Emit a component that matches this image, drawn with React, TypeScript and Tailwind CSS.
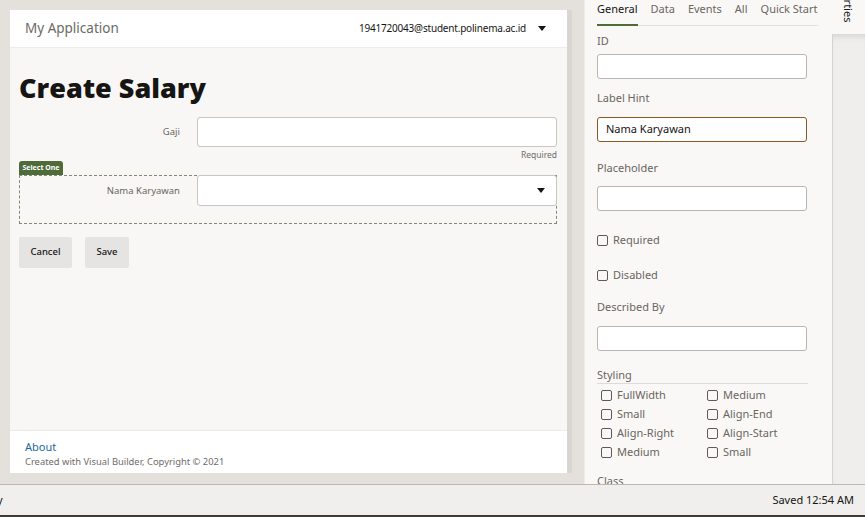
import React from 'react';

const font = { fontFamily: '"Noto Sans", "Open Sans", sans-serif' };

const Caret = ({ className = '' }: { className?: string }) => (
  <svg viewBox="0 0 8 5" className={className} fill="#161513">
    <path d="M0 0h8L4 5z" />
  </svg>
);

const Box = () => (
  <span className="inline-block w-[11px] h-[11px] rounded-[2px] border border-[#5f5863] bg-transparent shrink-0" />
);

const styling = [
  ['FullWidth', 'Medium'],
  ['Small', 'Align-End'],
  ['Align-Right', 'Align-Start'],
  ['Medium', 'Small'],
];

const Field = ({ label, value, mt, gap, focus }: { label: string; value?: string; mt: string; gap: string; focus?: boolean }) => (
  <div className={mt}>
    <div className="h-4 leading-4 text-[11px] text-[#6b655f]">{label}</div>
    <div
      className={`${gap} w-[210px] h-[25px] rounded-[3px] bg-white border flex items-center px-[8px] text-[11px] text-[#161513] ${
        focus ? 'border-[#8a5a22]' : 'border-[#b9b6b2]'
      }`}
    >
      {value}
    </div>
  </div>
);

export default function App() {
  return (
    <div className="w-[865px] h-[517px] flex flex-col bg-[#e4e1dd] overflow-hidden" style={font}>
      <div className="flex flex-1 min-h-0">
        {/* canvas */}
        <div className="w-[584px] pt-[10px] pl-[10px] pr-[12px] pb-[11px] flex">
          <div className="w-[557px] flex flex-col bg-[#f8f7f5]">
            <header className="h-[38px] bg-white border-b border-[#eeedeb] flex items-center justify-between pl-[15px] pr-[21px]">
              <span className="text-[13.5px] text-[#6c6a66]">My Application</span>
              <div className="flex items-center gap-[12px]">
                <span className="text-[10px] tracking-[-0.2px] text-[#161513]">1941720043@student.polinema.ac.id</span>
                <Caret className="w-[8px] h-[5px]" />
              </div>
            </header>

            <main className="flex-1 pl-[9px] pr-[10px]">
              <h1 className="mt-[22px] text-[27px] leading-[36px] font-extrabold text-[#161513]" style={{ fontFamily: '"Open Sans", "Noto Sans", sans-serif' }}>
                Create Salary
              </h1>

              <div className="mt-[11px] flex items-center">
                <label className="w-[161px] text-right text-[9.5px] text-[#6b655f]">Gaji</label>
                <div className="ml-[17px] w-[360px] h-[30px] bg-white border border-[#c8c6c2] rounded-[3px]" />
              </div>
              <div className="text-right text-[8.5px] leading-[13px] mt-[1px] text-[#6f6c68]">Required</div>

              <div className="w-[44px] h-[14px] rounded-t-[3px] bg-[#4f6b3a] text-white text-[7px] font-bold leading-[14px] text-center">
                Select One
              </div>
              <div className="h-[49px] border border-dashed border-[#7f8c74]">
                <div className="flex items-center">
                  <label className="w-[160px] text-right text-[9.5px] text-[#6b655f]">Nama Karyawan</label>
                  <div className="ml-[17px] w-[360px] h-[31px] -mt-px -mr-px bg-white border border-[#c8c6c2] rounded-[3px] flex items-center justify-end pr-[11px]">
                    <Caret className="w-[8px] h-[5px]" />
                  </div>
                </div>
              </div>

              <div className="mt-[13px] flex gap-[13px]">
                <button className="w-[53px] h-[31px] rounded-[2px] bg-[#e5e4e2] text-[9.5px] font-medium text-[#161513]">Cancel</button>
                <button className="w-[44px] h-[31px] rounded-[2px] bg-[#e5e4e2] text-[9.5px] font-medium text-[#161513]">Save</button>
              </div>
            </main>

            <footer className="h-[43px] bg-white border-t border-[#ebeae8] pl-[15px] pt-[7px]">
              <div className="text-[11px] leading-[17px] text-[#1d6a9b]">About</div>
              <div className="text-[9.4px] leading-[13px] text-[#6f6c68]">Created with Visual Builder, Copyright © 2021</div>
            </footer>
          </div>
          <div className="w-[5px] bg-[#d9d6d2]" />
        </div>

        <div className="w-px bg-[#efedeb]" />

        {/* properties panel */}
        <div className="w-[247px] bg-[#f9f8f6] pl-[12px] overflow-hidden">
          <div className="w-[221px] h-[26px] border-b border-[#e2e0dd] flex gap-[13px] text-[11px]">
            <span className="h-[26px] pt-[1px] border-b-2 border-[#4f6b3a] text-[#161513]">General</span>
            <span className="pt-[1px] text-[#6b655f]">Data</span>
            <span className="pt-[1px] text-[#6b655f]">Events</span>
            <span className="pt-[1px] text-[#6b655f]">All</span>
            <span className="pt-[1px] text-[#6b655f]">Quick Start</span>
          </div>

          <Field label="ID" mt="mt-[7px]" gap="mt-[5px]" />
          <Field label="Label Hint" mt="mt-[11px]" gap="mt-[11px]" value="Nama Karyawan" focus />
          <Field label="Placeholder" mt="mt-[18px]" gap="mt-[10px]" />

          <div className="mt-[21px] h-4 flex items-center gap-[5px] text-[11px] text-[#6b655f]">
            <Box />
            Required
          </div>
          <div className="mt-[19px] h-4 flex items-center gap-[5px] text-[11px] text-[#6b655f]">
            <Box />
            Disabled
          </div>

          <Field label="Described By" mt="mt-[16px]" gap="mt-[11px]" />

          <div className="mt-[16px] w-[211px] h-[17px] border-b border-[#dedcd9] text-[11px] leading-4 text-[#6b655f]">Styling</div>
          <div className="mt-[2px] pl-[4px] grid grid-cols-[106px_106px]">
            {styling.flat().map((s, i) => (
              <div key={i} className="h-[19px] flex items-center gap-[5px] text-[11px] text-[#6b655f]">
                <Box />
                {s}
              </div>
            ))}
          </div>
          <div className="mt-[11px] h-4 leading-4 text-[11px] text-[#6b655f]">Class</div>
        </div>

        {/* vertical tab strip */}
        <div className="w-[33px] flex flex-col">
          <div className="h-[34px] bg-[#f9f8f6] flex items-end justify-center pb-[12px] overflow-hidden">
            <span className="text-[11px] text-[#161513] leading-none whitespace-nowrap [writing-mode:vertical-rl]">Properties</span>
          </div>
          <div className="flex-1 bg-[#efeeec] border-l border-[#d6d3cf] shadow-[inset_0_6px_6px_-4px_rgba(0,0,0,0.12)]" />
        </div>
      </div>

      <div className="h-[33px] bg-[#f0efed] border-t border-[#bdbab6] border-b-2 border-b-[#3d3935] flex items-center justify-between pr-[11px] text-[11px] text-[#161513]">
        <span className="-ml-[3px]">y</span>
        <span>Saved 12:54 AM</span>
      </div>
    </div>
  );
}
